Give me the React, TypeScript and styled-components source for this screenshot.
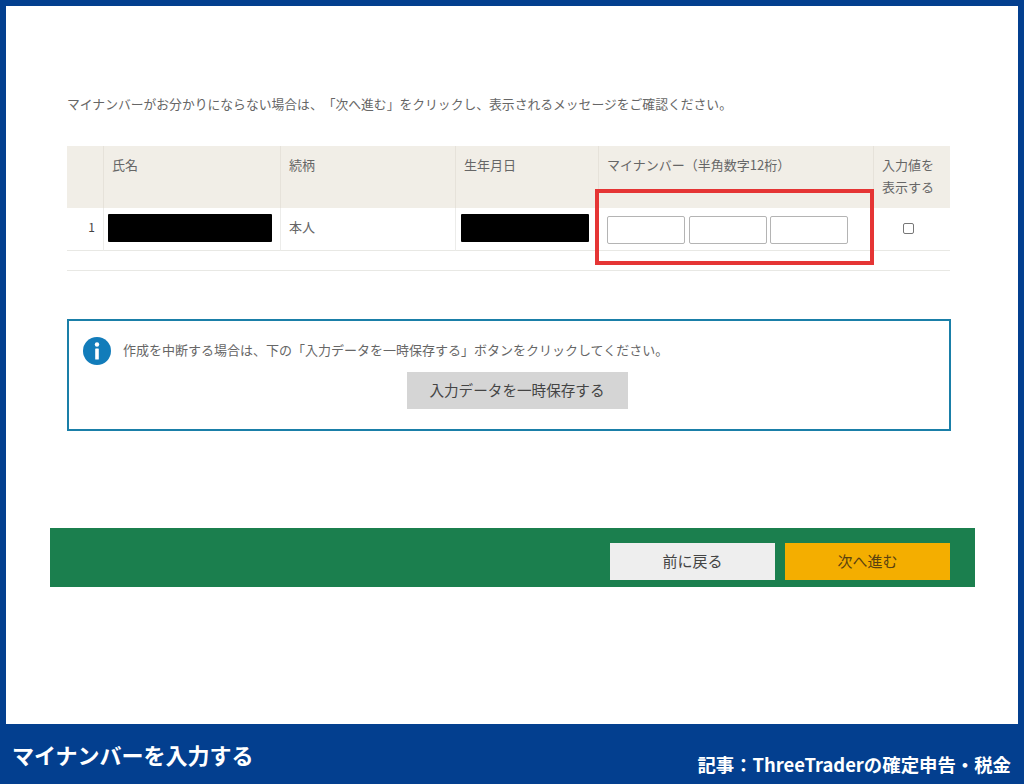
import React from 'react';
import styled, { createGlobalStyle } from 'styled-components';

const GlobalStyle = createGlobalStyle`
  html, body {
    margin: 0;
    padding: 0;
    background: #033f8f;
  }
  * {
    box-sizing: border-box;
  }
  body {
    font-family: "Noto Sans CJK JP", "Noto Sans", sans-serif;
    color: #555;
    text-spacing-trim: space-all;
  }
`;

const Frame = styled.div`
  width: 1024px;
  height: 784px;
  display: flex;
  flex-direction: column;
  padding: 6px 6px 0;
  background: #033f8f;
  overflow: hidden;
`;

const Sheet = styled.main`
  flex: 1;
  background: #fff;
  padding: 89px 0 0;
  display: flex;
  flex-direction: column;
`;

const Lead = styled.p`
  margin: 0 0 33px 61px;
  font-size: 12.8px;
  line-height: 18px;
  color: #666;
  white-space: nowrap;
`;

const TableWrap = styled.div`
  position: relative;
  margin-left: 61px;
  width: 883px;
  height: 125px;
  border-bottom: 1px solid #e8e8e4;
`;

const Row = styled.div`
  display: grid;
  grid-template-columns: 36px 177px 175px 143px 275px 77px;
`;

const HeadCell = styled.div`
  height: 62px;
  background: #f1eee7;
  border-left: 1px solid #e6e2da;
  padding: 8px 0 0 8px;
  font-size: 13px;
  line-height: 22px;
  color: #666;

  &:first-child {
    border-left: none;
  }
`;

const BodyCell = styled.div<{ $center?: boolean }>`
  height: 43px;
  border-left: 1px solid #ececea;
  border-bottom: 1px solid #e8e8e4;
  padding: 0 6px;
  display: flex;
  align-items: center;
  justify-content: ${(p) => (p.$center ? 'center' : 'flex-start')};
  font-size: 13px;
  color: #666;
`;

const IndexCell = styled(BodyCell)`
  border-left: none;
  justify-content: flex-end;
  padding: 0 8px 5px 0;
  font-size: 12px;
  color: #444;
`;

const Masked = styled.div<{ $width: number; $inset: number }>`
  width: ${(p) => p.$width}px;
  height: 28px;
  margin: -2px 0 0 ${(p) => p.$inset}px;
  background: #000;
  border-radius: 1px;
`;

const RelationText = styled.span`
  margin: -6px 0 0 2px;
`;

const NumberInputs = styled.div`
  display: flex;
  gap: 4px;
  margin: 1px 0 0 2px;
`;

const NumberInput = styled.input`
  width: 78px;
  height: 28px;
  padding: 0 4px;
  border: 1px solid #b4b4b4;
  border-radius: 2px;
  background: #fff;
  outline: none;

  & + & {
    margin-left: -0.5px;
  }
`;

const ShowCheck = styled.input`
  width: 11px;
  height: 11px;
  margin: -1px 8px 0 0;
  appearance: none;
  border: 1px solid #777;
  border-radius: 2px;
  background: #fff;
`;

const Highlight = styled.div`
  position: absolute;
  left: 528px;
  top: 43px;
  width: 279px;
  height: 76px;
  border: 4px solid #e53535;
  pointer-events: none;
`;

const Notice = styled.section`
  margin: 48px 0 0 61px;
  width: 884px;
  height: 112px;
  border: 2px solid #1a7fa8;
  padding: 16px 15px 0 14px;
  display: flex;
  flex-direction: column;
`;

const NoticeLine = styled.div`
  display: flex;
  align-items: center;
  gap: 12px;
  font-size: 13px;
  line-height: 28px;
  color: #666;
  white-space: nowrap;
`;

const NoticeText = styled.span`
  margin-top: -3px;
`;

const NoticeAction = styled.div`
  display: flex;
  justify-content: center;
  margin: 7px 0 0 17px;
`;

const SaveButton = styled.button`
  width: 221px;
  height: 37px;
  border: none;
  padding: 0 0 3px;
  background: #d5d5d5;
  color: #444;
  font-family: inherit;
  font-size: 14.6px;
`;

const ActionBar = styled.div`
  margin: 97px 0 0 44px;
  width: 925px;
  height: 59px;
  background: #1b7f4e;
  display: flex;
  justify-content: flex-end;
  align-items: flex-end;
  gap: 10px;
  padding: 0 25px 7px 0;
`;

const NavButton = styled.button<{ $primary?: boolean }>`
  width: 165px;
  height: 37px;
  border: none;
  padding: 0 0 2px;
  background: ${(p) => (p.$primary ? '#f4ae00' : '#eeeeee')};
  color: ${(p) => (p.$primary ? '#5a4210' : '#444')};
  font-family: inherit;
  font-size: 15px;
`;

const Caption = styled.footer`
  height: 60px;
  margin: 0 -6px;
  display: flex;
  justify-content: space-between;
  padding: 0 13px 0 12px;
  color: #fff;
  font-weight: 700;
  white-space: nowrap;
`;

const CaptionTitle = styled.div`
  font-size: 22px;
  line-height: 30px;
  margin-top: 15px;
`;

const CaptionSource = styled.div`
  font-size: 18.4px;
  line-height: 26px;
  margin-top: 27px;
`;

function InfoIcon() {
  return (
    <svg width="28" height="28" viewBox="0 0 28 28" aria-hidden="true">
      <circle cx="14" cy="14" r="14" fill="#127cba" />
      <circle cx="14" cy="7.5" r="2.2" fill="#fff" />
      <rect x="12.2" y="11.5" width="3.6" height="11" rx="0.6" fill="#fff" />
    </svg>
  );
}

export default function App() {
  return (
    <Frame>
      <GlobalStyle />
      <Sheet>
        <Lead>マイナンバーがお分かりにならない場合は、「次へ進む」をクリックし、表示されるメッセージをご確認ください。</Lead>
        <TableWrap>
          <Row>
            <HeadCell />
            <HeadCell>氏名</HeadCell>
            <HeadCell>続柄</HeadCell>
            <HeadCell>生年月日</HeadCell>
            <HeadCell>マイナンバー（半角数字12桁）</HeadCell>
            <HeadCell>入力値を<br />表示する</HeadCell>
          </Row>
          <Row>
            <IndexCell>1</IndexCell>
            <BodyCell><Masked $width={164} $inset={-2} /></BodyCell>
            <BodyCell><RelationText>本人</RelationText></BodyCell>
            <BodyCell><Masked $width={128} $inset={-1} /></BodyCell>
            <BodyCell>
              <NumberInputs>
                <NumberInput />
                <NumberInput />
                <NumberInput />
              </NumberInputs>
            </BodyCell>
            <BodyCell $center><ShowCheck type="checkbox" /></BodyCell>
          </Row>
          <Highlight />
        </TableWrap>
        <Notice>
          <NoticeLine>
            <InfoIcon />
            <NoticeText>作成を中断する場合は、下の「入力データを一時保存する」ボタンをクリックしてください。</NoticeText>
          </NoticeLine>
          <NoticeAction>
            <SaveButton type="button">入力データを一時保存する</SaveButton>
          </NoticeAction>
        </Notice>
        <ActionBar>
          <NavButton type="button">前に戻る</NavButton>
          <NavButton type="button" $primary>次へ進む</NavButton>
        </ActionBar>
      </Sheet>
      <Caption>
        <CaptionTitle>マイナンバーを入力する</CaptionTitle>
        <CaptionSource>記事：ThreeTraderの確定申告・税金</CaptionSource>
      </Caption>
    </Frame>
  );
}
